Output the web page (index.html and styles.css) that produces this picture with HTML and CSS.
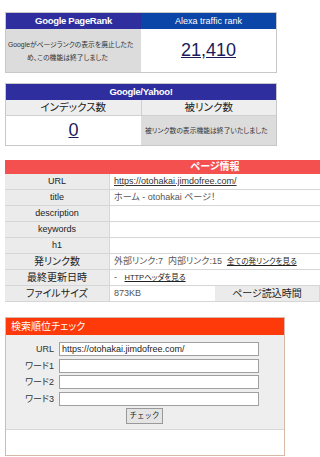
FILE: index.html
```html
<!DOCTYPE html>
<html lang="ja">
<head>
<meta charset="utf-8">
<link rel="stylesheet" href="styles.css">
</head>
<body>
<div class="page">
  <table class="rank">
    <tr>
      <th class="h-pr">Google PageRank</th>
      <th class="h-alexa">Alexa traffic rank</th>
    </tr>
    <tr>
      <td class="gray small"><p class="ln l1">Googleがページランクの表示を廃止したた</p><p class="ln l2">め、この機能は終了しました</p></td>
      <td class="big"><a href="#">21,410</a></td>
    </tr>
  </table>

  <table class="yahoo">
    <tr><th colspan="2" class="h-pr">Google/Yahoo!</th></tr>
    <tr>
      <td class="sub">インデックス数</td>
      <td class="sub">被リンク数</td>
    </tr>
    <tr>
      <td class="big"><a href="#">0</a></td>
      <td class="gray small left">被リンク数の表示機能は終了いたしました</td>
    </tr>
  </table>

  <div class="clip">
  <table class="info">
    <tr><th colspan="4" class="h-info">ページ情報</th></tr>
    <tr><td class="lab">URL</td><td colspan="3" class="val"><a href="#">https://otohakai.jimdofree.com/</a></td></tr>
    <tr><td class="lab">title</td><td colspan="3" class="val">ホーム - otohakai ページ！</td></tr>
    <tr><td class="lab">description</td><td colspan="3" class="val"></td></tr>
    <tr><td class="lab">keywords</td><td colspan="3" class="val"></td></tr>
    <tr><td class="lab">h1</td><td colspan="3" class="val"></td></tr>
    <tr><td class="lab jp">発リンク数</td><td colspan="3" class="val">外部リンク:7&nbsp;&nbsp;内部リンク:15&nbsp;&nbsp;<a href="#" class="sm">全ての発リンクを見る</a></td></tr>
    <tr><td class="lab jp">最終更新日時</td><td colspan="3" class="val">-&nbsp;&nbsp;&nbsp;<a href="#" class="sm">HTTPヘッダを見る</a></td></tr>
    <tr><td class="lab jp">ファイルサイズ</td><td class="val">873KB</td><td class="lab jp">ページ読込時間</td><td class="val"></td></tr>
  </table>
  </div>

  <div class="search">
    <div class="s-head">検索順位チェック</div>
    <div class="s-body">
      <div class="row"><label>URL</label><input type="text" value="https://otohakai.jimdofree.com/"></div>
      <div class="row"><label>ワード1</label><input type="text"></div>
      <div class="row"><label>ワード2</label><input type="text"></div>
      <div class="row"><label>ワード3</label><input type="text"></div>
      <div class="btnrow"><button type="button">チェック</button></div>
    </div>
    <div class="s-foot"></div>
  </div>
</div>
</body>
</html>
```

FILE: styles.css
```css
html, body {
  margin: 0;
  padding: 0;
  background: #fff;
  overflow: hidden;
}
body {
  font-family: "Liberation Sans", "Noto Sans CJK JP", sans-serif;
  font-feature-settings: "palt";
  color: #333;
}
.page {
  width: 320px;
  padding: 12px 0 0 5px;
  box-sizing: border-box;
}
table {
  border-collapse: collapse;
  table-layout: fixed;
}
th, td {
  padding: 0;
}
.rank, .yahoo {
  width: 272px;
  border: 1px solid #c8c8c8;
}
.rank th, .yahoo th {
  height: 16px;
  color: #fff;
  font-size: 9.5px;
  font-weight: bold;
  text-align: center;
  line-height: 16px;
  letter-spacing: -0.3px;
}
.h-pr { background: #2e2e9e; }
.rank th.h-alexa { background: #0b45a8; font-weight: normal; letter-spacing: 0; font-size: 9px; }
.gray { background: #dcdcdc; }
.small {
  font-size: 6.8px;
  line-height: 13px;
  text-align: left;
  color: #333;
}
.ln {
  margin: 0;
  white-space: nowrap;
  text-align: left;
}
.l1 { padding-left: 2px; }
.l2 { text-indent: 21px; }
.small.left { padding-left: 4px; white-space: nowrap; }
.rank tr:nth-child(2) td { height: 43px; }
.big {
  text-align: center;
  background: #fff;
  line-height: 20px;
}
.big a {
  color: #1a1a5c;
  font-size: 18px;
  text-decoration: underline;
}
.yahoo {
  margin-top: 10px;
}
.yahoo td.sub {
  height: 15px;
  background: #eeeeee;
  text-align: center;
  font-size: 10.5px;
  line-height: 15px;
  color: #222;
  border-bottom: 1px solid #d0d0d0;
}
.yahoo td.sub:first-child { border-right: 1px solid #d0d0d0; }
.yahoo tr:nth-child(3) td { height: 29px; }

.clip {
  width: 315px;
  overflow: hidden;
  margin-top: 14px;
}
.info {
  width: 420px;
  border-collapse: separate;
  border-spacing: 0;
}
.h-info {
  background: #f55050;
  color: #fff;
  font-size: 10px;
  font-weight: bold;
  height: 14px;
  line-height: 14px;
  text-align: center;
}
.info td {
  height: 15px;
  font-size: 9px;
  line-height: 15px;
  border-bottom: 1px solid #d6d6d6;
  white-space: nowrap;
  overflow: hidden;
}
.info .lab {
  width: 103px;
  background: #ebebeb;
  text-align: center;
  color: #222;
  border-right: 1px solid #d6d6d6;
}
.info .lab.jp { font-size: 10px; }
.info .val {
  background: #fff;
  padding-left: 4px;
  color: #555;
}
.info a { color: #333; }
.info a.sm { font-size: 7.5px; color: #222; }

.search {
  width: 280px;
  margin-top: 15px;
  border: 1px solid #d8b8a8;
  box-sizing: border-box;
}
.s-head {
  background: #ff3a0a;
  color: #fff;
  font-size: 10px;
  height: 17px;
  line-height: 17px;
  padding-left: 5px;
  overflow: hidden;
}
.s-body {
  background: #eeeeee;
  padding: 7px 0 5px;
  border-bottom: 1px solid #d8d8d8;
}
.row {
  display: flex;
  align-items: center;
  height: 14px;
  margin-bottom: 2.5px;
}
.row label {
  width: 48px;
  text-align: right;
  font-size: 9px;
  line-height: 14px;
  color: #333;
  padding-right: 5px;
}
.row input {
  width: 200px;
  height: 14px;
  box-sizing: border-box;
  border: 1px solid #a0a0a0;
  background: #fff;
  font-family: "Liberation Sans", "Noto Sans CJK JP", sans-serif;
  font-size: 9px;
  padding: 0 2px;
  margin: 0;
  color: #222;
}
.btnrow {
  padding-left: 120px;
  height: 16px;
  display: flex;
}
.btnrow button {
  height: 16px;
  width: 37px;
  padding: 0;
  font-size: 7.5px;
  line-height: 14px;
  font-family: "Liberation Sans", "Noto Sans CJK JP", sans-serif;
  border: 1px solid #999;
  background: #e4e4e4;
  color: #222;
}
.s-foot {
  height: 25px;
  background: #fff;
}
```
